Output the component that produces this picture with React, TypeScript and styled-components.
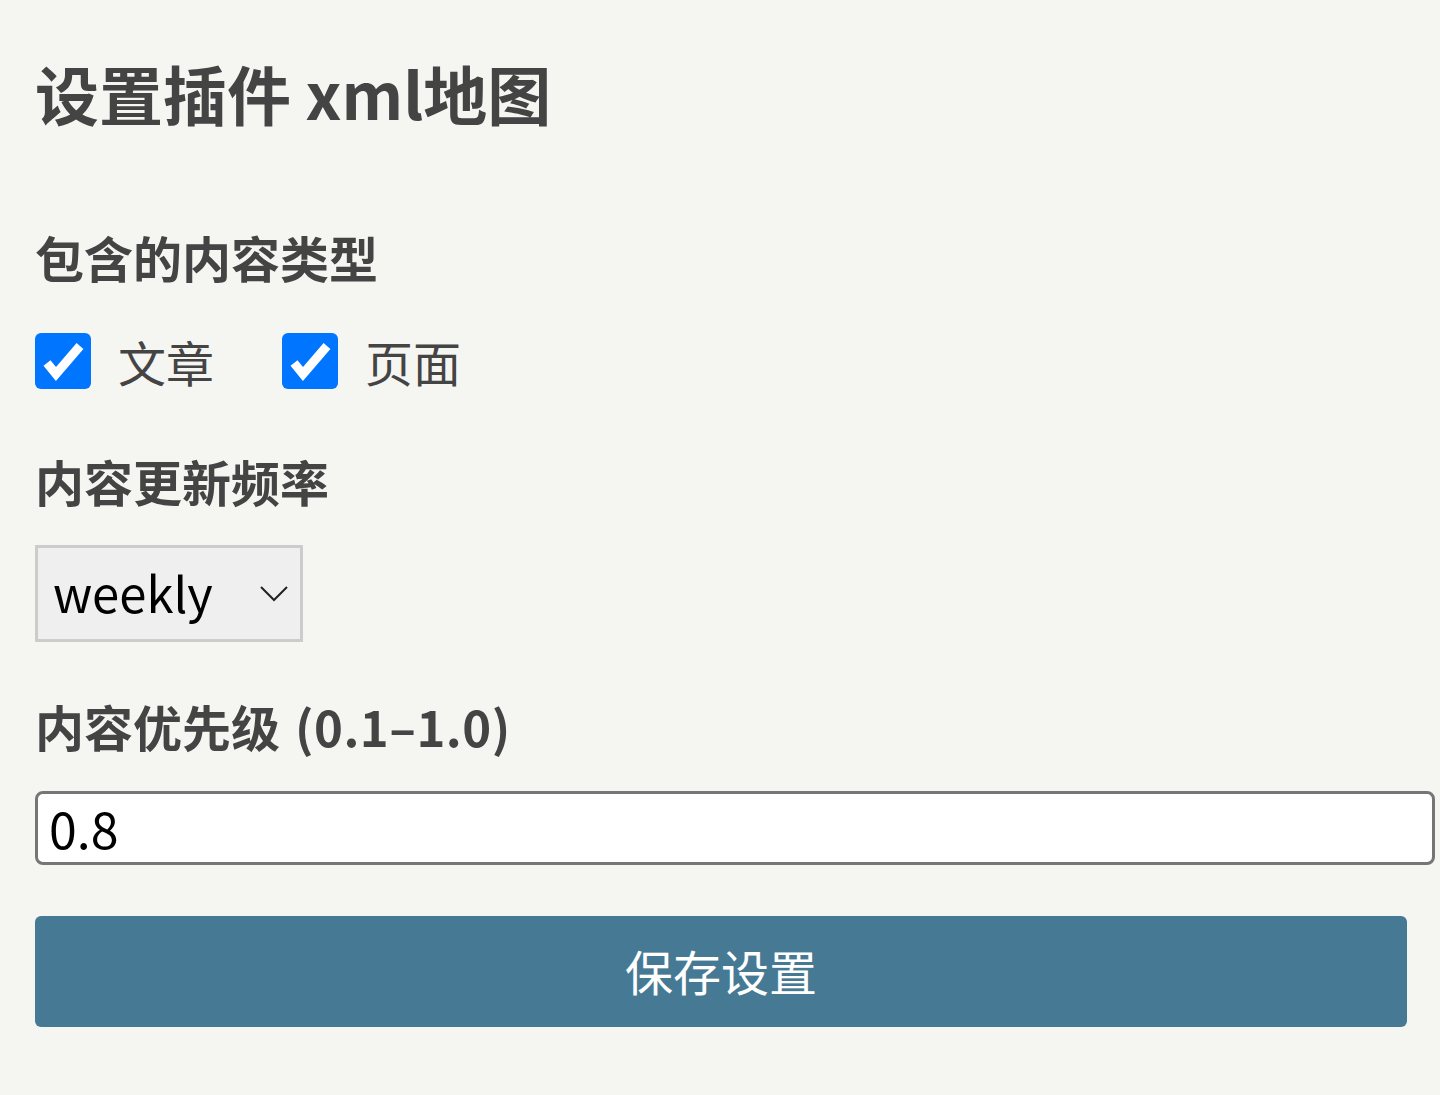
import React, { useState } from "react";
import styled, { createGlobalStyle } from "styled-components";

const GlobalStyle = createGlobalStyle`
  html, body {
    margin: 0;
    padding: 0;
    background: #f5f5f1;
  }
  body {
    font-family: "Noto Sans CJK SC", "Noto Sans", sans-serif;
    color: #444;
  }
  * { box-sizing: border-box; }
`;

const Page = styled.div`
  display: flex;
  flex-direction: column;
  padding: 44px 33px 48px 35px;
`;

const Title = styled.h1`
  margin: 0 0 81px;
  font-size: 64px;
  line-height: 96px;
  font-weight: 700;
  color: #444;
`;

const Heading = styled.h2<{ $gap: number }>`
  margin: 0 0 ${(p) => p.$gap}px;
  font-size: 49px;
  line-height: 72px;
  font-weight: 700;
  color: #444;
`;

const Range = styled.span`
  margin-left: 15px;
  letter-spacing: 0.5px;
`;

const CheckRow = styled.div`
  display: flex;
  align-items: center;
  gap: 68px;
  height: 56px;
  margin-bottom: 56px;
`;

const CheckLabel = styled.label`
  display: flex;
  align-items: center;
  gap: 27px;
  font-size: 48px;
  line-height: 56px;
  color: #444;
  cursor: pointer;
`;

const Box = styled.span<{ $on: boolean }>`
  display: flex;
  width: 56px;
  height: 56px;
  border-radius: 6px;
  background: ${(p) => (p.$on ? "#0075ff" : "#fff")};
  border: ${(p) => (p.$on ? "none" : "3px solid #767676")};
`;

const SelectWrap = styled.div`
  position: relative;
  width: 268px;
  height: 97px;
  margin-bottom: 48px;
`;

const Select = styled.select`
  appearance: none;
  width: 100%;
  height: 100%;
  padding: 0 0 4px 15px;
  background: #efefef;
  border: 3px solid #ccc;
  border-radius: 0;
  font-family: "Noto Sans CJK SC", "Noto Sans", sans-serif;
  font-size: 49px;
  color: #000;
  outline: none;
`;

const Chevron = styled.svg`
  position: absolute;
  right: 15px;
  top: 41px;
  pointer-events: none;
`;

const NumberInput = styled.input`
  box-sizing: content-box;
  width: 100%;
  height: 66px;
  padding: 0 11px 2px;
  margin: 0 0 51px;
  border: 3px solid #767676;
  border-radius: 8px;
  background: #fff;
  font-family: "Noto Sans CJK SC", "Noto Sans", sans-serif;
  font-size: 50px;
  color: #000;
  outline: none;
`;

const SaveButton = styled.button`
  width: 100%;
  height: 111px;
  padding: 0 0 4px;
  border: none;
  border-radius: 6px;
  background: #467a94;
  color: #fff;
  font-family: "Noto Sans CJK SC", "Noto Sans", sans-serif;
  font-size: 48px;
  cursor: pointer;
`;

function Check({ on }: { on: boolean }) {
  return (
    <Box $on={on}>
      {on && (
        <svg width="56" height="56" viewBox="0 0 56 56">
          <path d="M12 30 L21 41 L45 13" fill="none" stroke="#fff" strokeWidth="9" />
        </svg>
      )}
    </Box>
  );
}

export default function App() {
  const [types, setTypes] = useState({ post: true, page: true });
  const [freq, setFreq] = useState("weekly");
  const [priority, setPriority] = useState("0.8");

  return (
    <Page>
      <GlobalStyle />
      <Title>设置插件 xml地图</Title>

      <Heading $gap={40}>包含的内容类型</Heading>
      <CheckRow>
        <CheckLabel onClick={() => setTypes({ ...types, post: !types.post })}>
          <Check on={types.post} />
          文章
        </CheckLabel>
        <CheckLabel onClick={() => setTypes({ ...types, page: !types.page })}>
          <Check on={types.page} />
          页面
        </CheckLabel>
      </CheckRow>

      <Heading $gap={28}>内容更新频率</Heading>
      <SelectWrap>
        <Select value={freq} onChange={(e) => setFreq(e.target.value)}>
          <option value="always">always</option>
          <option value="hourly">hourly</option>
          <option value="daily">daily</option>
          <option value="weekly">weekly</option>
          <option value="monthly">monthly</option>
          <option value="yearly">yearly</option>
          <option value="never">never</option>
        </Select>
        <Chevron width="28" height="16" viewBox="0 0 28 16">
          <path d="M1 1 L14 14 L27 1" fill="none" stroke="#222" strokeWidth="2" />
        </Chevron>
      </SelectWrap>

      <Heading $gap={29}>
        内容优先级<Range>(0.1–1.0)</Range>
      </Heading>
      <NumberInput
        type="text"
        value={priority}
        onChange={(e) => setPriority(e.target.value)}
      />

      <SaveButton>保存设置</SaveButton>
    </Page>
  );
}
